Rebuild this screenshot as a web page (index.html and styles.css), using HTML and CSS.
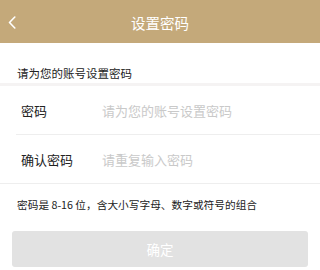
FILE: index.html
```html
<!DOCTYPE html>
<html lang="zh-CN">
<head>
<meta charset="utf-8">
<title>设置密码</title>
<link rel="stylesheet" href="styles.css">
</head>
<body>
<div class="nav">
  <div class="back">
    <svg width="8" height="13" viewBox="0 0 8 13"><path d="M6.8 1 L1.5 6.5 L6.8 12" fill="none" stroke="#fff" stroke-width="1.6" stroke-linecap="round" stroke-linejoin="round"/></svg>
  </div>
  <div class="title">设置密码</div>
  <div></div>
</div>
<div class="hint">请为您的账号设置密码</div>
<div class="form">
  <label class="row first">
    <span class="label">密码</span>
    <input class="field" type="password" placeholder="请为您的账号设置密码">
  </label>
  <label class="row">
    <span class="label">确认密码</span>
    <input class="field" type="password" placeholder="请重复输入密码">
  </label>
</div>
<div class="rule">密码是 8-16 位，含大小写字母、数字或符号的组合</div>
<button class="submit" type="button">确定</button>
</body>
</html>
```

FILE: styles.css
```css
html, body {
  margin: 0;
  padding: 0;
  background: #fff;
  font-family: "Noto Sans CJK SC", "Noto Sans", sans-serif;
  color: #222;
}
.nav {
  height: 43px;
  background: #c4a97a;
  display: grid;
  grid-template-columns: 40px 1fr 40px;
  align-items: center;
}
.back {
  padding-left: 8px;
  display: flex;
  align-items: center;
  padding-top: 1px;
}
.title {
  text-align: center;
  color: #fff;
  font-size: 14.5px;
  line-height: 20px;
  padding-top: 2px;
}
.hint {
  box-sizing: border-box;
  height: 40px;
  padding: 23px 17px 0;
  font-size: 11.5px;
  line-height: 14px;
  color: #222;
}
.form {
  border-top: 3px solid #f5f3f3;
  border-bottom: 1px solid #eeeeee;
}
.row {
  display: flex;
  align-items: center;
  height: 47px;
  margin-left: 16px;
  padding-left: 5px;
  padding-top: 1px;
}
.row.first {
  border-bottom: 1px solid #eeeeee;
}
.label {
  width: 81px;
  flex: none;
  font-size: 13px;
  color: #222;
}
.field {
  flex: 1;
  min-width: 0;
  border: 0;
  outline: none;
  padding: 0;
  margin: 0;
  background: transparent;
  font-family: inherit;
  font-size: 13px;
  color: #222;
}
.field::placeholder {
  color: #c9c9c9;
}
.rule {
  padding: 14px 17px 0;
  font-size: 10.7px;
  line-height: 14px;
  color: #222;
}
.submit {
  display: block;
  box-sizing: border-box;
  width: calc(100% - 24px);
  margin: 19px 12px 0;
  height: 36px;
  border: 0;
  border-radius: 3px;
  background: #e2e2e2;
  color: #fff;
  font-family: inherit;
  font-size: 13.5px;
  padding: 0;
}
```
